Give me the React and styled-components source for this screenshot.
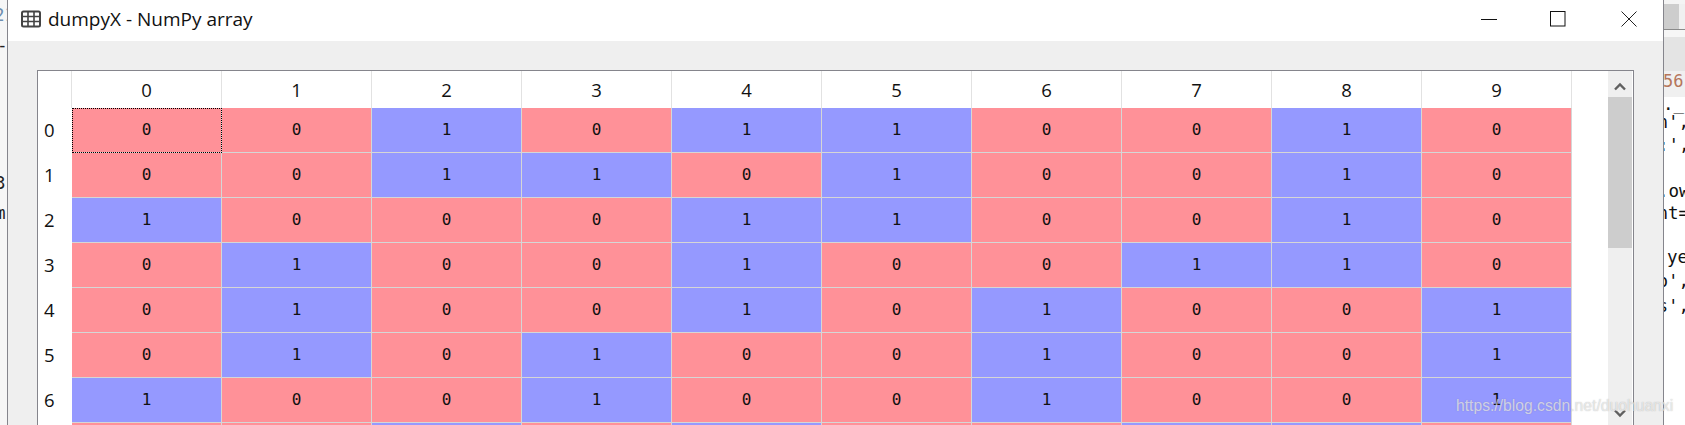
import React from "react";
import styled, { createGlobalStyle } from "styled-components";

const Global = createGlobalStyle`
  html, body { margin: 0; padding: 0; background: #fff; overflow: hidden; }
  #root { width: 1685px; height: 425px; overflow: hidden; }
`;

const Page = styled.div`
  position: relative;
  display: flex;
  width: 1685px;
  height: 425px;
  overflow: hidden;
`;

const LeftStrip = styled.div`
  width: 7px;
  flex: none;
  background: #f6f6f6;
  overflow: hidden;
  font-family: "DejaVu Sans Mono", monospace;
  font-size: 17.5px;
  color: #222;
`;

const StripLine = styled.div`
  height: ${(p) => p.$h}px;
  line-height: ${(p) => p.$h}px;
  white-space: pre;
  color: ${(p) => p.$color || "inherit"};
  text-indent: ${(p) => p.$indent || 0}px;
`;

const Window = styled.div`
  width: 1655px;
  flex: none;
  display: flex;
  flex-direction: column;
  border-left: 1px solid #85858c;
  border-right: 1px solid #85858c;
  background: #efefef;
`;

const TitleBar = styled.div`
  height: 41px;
  flex: none;
  background: #fff;
  display: flex;
  align-items: center;
  padding-left: 13px;
  padding-right: 26px;
`;

const TitleIcon = styled.svg`
  width: 20px;
  height: 18px;
  flex: none;
  margin-right: 7px;
  margin-top: -4px;
`;

const TitleText = styled.div`
  flex: 1;
  font-family: "Open Sans", sans-serif;
  font-size: 19px;
  color: #111;
  white-space: nowrap;
  margin-top: -4px;
`;

const WinButton = styled.svg`
  width: 16px;
  height: 16px;
  flex: none;
  margin-left: ${(p) => p.$gap}px;
  margin-top: -4px;
`;

const Body = styled.div`
  flex: 1;
  padding: 29px 29px 0 29px;
  min-height: 0;
`;

const Frame = styled.div`
  height: 360px;
  display: flex;
  border: 1px solid #85858c;
  border-bottom: none;
  background: #fff;
  overflow: hidden;
`;

const RowHeaders = styled.div`
  width: 34px;
  flex: none;
  padding-top: 37px;
`;

const RowLabel = styled.div`
  height: 45px;
  line-height: 43px;
  padding-left: 6px;
  font-family: "Open Sans", sans-serif;
  font-size: 18.5px;
  color: #111;
`;

const TableArea = styled.div`
  width: 1500px;
  flex: none;
  display: flex;
  flex-direction: column;
`;

const HeaderRow = styled.div`
  display: grid;
  grid-template-columns: repeat(10, 150px);
  height: 37px;
  flex: none;
`;

const ColHeader = styled.div`
  display: flex;
  align-items: center;
  justify-content: center;
  border-right: 1px solid #e2e2e2;
  font-family: "Open Sans", sans-serif;
  font-size: 18.5px;
  color: #111;
  padding-bottom: 1px;
  box-sizing: border-box;
`;

const HeaderTick = styled.div`
  position: absolute;
  left: 71px;
  top: 71px;
  width: 1px;
  height: 37px;
  background: #e2e2e2;
`;

const Grid = styled.div`
  display: grid;
  grid-template-columns: repeat(10, 150px);
  grid-auto-rows: 45px;
`;

const Cell = styled.div`
  box-sizing: border-box;
  display: flex;
  align-items: center;
  justify-content: center;
  background: ${(p) => (p.$v ? "#9599ff" : "#ff9198")};
  border-right: 1px solid #d6d6d6;
  border-bottom: 1px solid #d6d6d6;
  font-family: "DejaVu Sans Mono", monospace;
  font-size: 16px;
  color: #111;
  padding-bottom: 2px;
  ${(p) => p.$focus && "outline: 1px dotted #000; outline-offset: -1px;"}
`;

const Filler = styled.div`
  width: 36px;
  flex: none;
`;

const Scrollbar = styled.div`
  width: 24px;
  flex: none;
  background: #efefef;
  display: flex;
  flex-direction: column;
  align-items: center;
`;

const ArrowSlot = styled.div`
  height: 26px;
  flex: none;
  box-sizing: border-box;
  display: flex;
  align-items: center;
  justify-content: center;
  padding-top: ${(p) => p.$top || 0}px;
  padding-bottom: ${(p) => p.$bottom || 0}px;
`;

const Thumb = styled.div`
  width: 24px;
  height: 151px;
  flex: none;
  background: #cdcdcd;
`;

const Track = styled.div`
  flex: 1;
`;

const RightStrip = styled.div`
  flex: 1;
  min-width: 0;
  display: flex;
  flex-direction: column;
  background: #fff;
  overflow: hidden;
`;

const TabGap = styled.div`
  height: 4px;
  background: #f4f4f4;
`;

const TabBlock = styled.div`
  height: 25px;
  width: 15px;
  background: #cdcdcd;
`;

const TabRow = styled.div`
  height: 25px;
  background: #f0f0f0;
`;

const TabLine = styled.div`
  height: 1px;
  background: #8a8a8a;
`;

const ToolBand = styled.div`
  height: 7px;
  background: #f6f6f6;
`;

const ToolBandDark = styled.div`
  height: 34px;
  background: #e4e4e4;
`;

const LineNo = styled.div`
  height: 26px;
  line-height: 20px;
  background: #f0f0f0;
  color: #b5765c;
  font-family: "DejaVu Sans Mono", monospace;
  font-size: 17px;
  white-space: nowrap;
  text-indent: -1px;
`;

const Code = styled.div`
  font-family: "DejaVu Sans Mono", monospace;
  font-size: 17.5px;
  color: #111;
`;

const Watermark = styled.div`
  position: absolute;
  left: 1456px;
  top: 397px;
  font-family: "Liberation Sans", sans-serif;
  font-size: 15.7px;
  color: rgba(255, 255, 255, 0.62);
  text-shadow: 0 0 1px rgba(110, 110, 110, 0.5);
  white-space: nowrap;
`;

const data = [
  [0, 0, 1, 0, 1, 1, 0, 0, 1, 0],
  [0, 0, 1, 1, 0, 1, 0, 0, 1, 0],
  [1, 0, 0, 0, 1, 1, 0, 0, 1, 0],
  [0, 1, 0, 0, 1, 0, 0, 1, 1, 0],
  [0, 1, 0, 0, 1, 0, 1, 0, 0, 1],
  [0, 1, 0, 1, 0, 0, 1, 0, 0, 1],
  [1, 0, 0, 1, 0, 0, 1, 0, 0, 1],
  [0, 0, 1, 0, 1, 0, 0, 1, 1, 0],
];

const codeLines = [
  { h: 14, t: "._", i: -1 },
  { h: 22, t: "n',", i: -6.5 },
  { h: 24, t: ":',", i: -6 },
  { h: 23, t: " ", i: 0 },
  { h: 22, t: ".ow", i: -6 },
  { h: 22, t: "nt=", i: -6.5 },
  { h: 22, t: " ", i: 0 },
  { h: 23, t: "ye", i: 3 },
  { h: 25, t: "o',", i: -6.5 },
  { h: 24, t: "s',", i: -6.5 },
];

export default function App() {
  return (
    <Page>
      <Global />
      <LeftStrip>
        <StripLine $h={30} $color="#6f8fb0" $indent={-6}>21</StripLine>
        <StripLine $h={30} $indent={-3}>-</StripLine>
        <StripLine $h={108} />
        <StripLine $h={30} $indent={-5}>3</StripLine>
        <StripLine $h={30} $indent={-5}>m</StripLine>
      </LeftStrip>
      <Window>
        <TitleBar>
          <TitleIcon viewBox="0 0 20 18">
            <rect x="1" y="1.5" width="18" height="15" rx="1.5" fill="none" stroke="#444" strokeWidth="2" />
            <path d="M1 6.5h18M1 11.5h18M7 2v14M13 2v14" stroke="#444" strokeWidth="1.6" fill="none" />
          </TitleIcon>
          <TitleText>dumpyX - NumPy array</TitleText>
          <WinButton $gap={0} viewBox="0 0 16 16">
            <path d="M0 8.5h16" stroke="#111" strokeWidth="1" />
          </WinButton>
          <WinButton $gap={53} viewBox="0 0 16 16">
            <rect x="0.5" y="0.5" width="14.5" height="14.5" fill="none" stroke="#111" strokeWidth="1" />
          </WinButton>
          <WinButton $gap={55} viewBox="0 0 16 16">
            <path d="M0.5 0.5L15.5 15.5M15.5 0.5L0.5 15.5" stroke="#222" strokeWidth="1" />
          </WinButton>
        </TitleBar>
        <Body>
          <Frame>
            <RowHeaders>
              {[0, 1, 2, 3, 4, 5, 6].map((r) => (
                <RowLabel key={r}>{r}</RowLabel>
              ))}
            </RowHeaders>
            <TableArea>
              <HeaderRow>
                {data[0].map((_, c) => (
                  <ColHeader key={c}>{c}</ColHeader>
                ))}
              </HeaderRow>
              <Grid>
                {data.flatMap((row, r) =>
                  row.map((v, c) => (
                    <Cell key={`${r}-${c}`} $v={v} $focus={r === 0 && c === 0}>
                      {r < 7 ? v : ""}
                    </Cell>
                  ))
                )}
              </Grid>
            </TableArea>
            <Filler />
            <Scrollbar>
              <ArrowSlot $top={4}>
                <svg width="12" height="9" viewBox="0 0 12 9">
                  <path d="M1 7.5L6 2.5L11 7.5" fill="none" stroke="#606060" strokeWidth="2.4" />
                </svg>
              </ArrowSlot>
              <Thumb />
              <Track />
              <ArrowSlot $bottom={10}>
                <svg width="12" height="9" viewBox="0 0 12 9">
                  <path d="M1 1.5L6 6.5L11 1.5" fill="none" stroke="#606060" strokeWidth="2.4" />
                </svg>
              </ArrowSlot>
            </Scrollbar>
          </Frame>
        </Body>
      </Window>
      <RightStrip>
        <TabGap />
        <TabRow><TabBlock /></TabRow>
        <TabLine />
        <ToolBand />
        <ToolBandDark />
        <LineNo>56:</LineNo>
        <Code>
          {codeLines.map((l, i) => (
            <StripLine key={i} $h={l.h} $indent={l.i}>{l.t}</StripLine>
          ))}
        </Code>
      </RightStrip>
      <HeaderTick />
      <Watermark>https://blog.csdn.net/duohuanxi</Watermark>
    </Page>
  );
}
